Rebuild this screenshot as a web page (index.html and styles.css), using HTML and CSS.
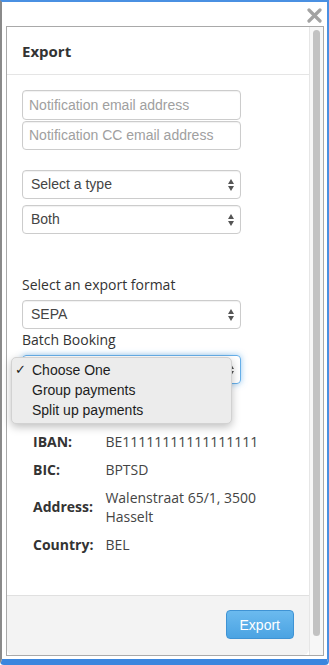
FILE: index.html
```html
<!DOCTYPE html>
<html lang="en">
<head>
	<meta charset="UTF-8">
	<title>Export</title>
	<link rel="stylesheet" href="styles.css">
</head>
<body>
	<div class="window">
		<div class="topbar">
			<svg class="close" width="15" height="15" viewBox="0 0 15 15">
				<path d="M2 2 L13 13 M13 2 L2 13" stroke="#a3a3a3" stroke-width="3.2" stroke-linecap="round"/>
			</svg>
		</div>
		<div class="frame">
			<section class="modal">
				<header class="modal-head">Export</header>
				<div class="modal-body">
					<div class="field">Notification email address</div>
					<div class="field field-cc">Notification CC email address</div>

					<div class="select select-type">Select a type<span class="arrows"></span></div>
					<div class="select select-both">Both<span class="arrows"></span></div>

					<label class="lbl lbl-format">Select an export format</label>
					<div class="select select-sepa">SEPA<span class="arrows"></span></div>
					<label class="lbl lbl-batch">Batch Booking</label>
					<div class="batch-wrap">
						<div class="select focused">Choose One<span class="arrows"></span></div>
						<ul class="popup">
							<li class="checked">Choose One</li>
							<li>Group payments</li>
							<li>Split up payments</li>
						</ul>
					</div>

					<h4 class="sub">Ordering account</h4>
					<dl class="details">
						<dt>IBAN:</dt><dd>BE11111111111111111</dd>
						<dt>BIC:</dt><dd>BPTSD</dd>
						<dt>Address:</dt><dd>Walenstraat 65/1, 3500 Hasselt</dd>
						<dt>Country:</dt><dd>BEL</dd>
					</dl>
				</div>
				<footer class="modal-foot">
					<button class="btn">Export</button>
				</footer>
			</section>
			<div class="scrollbar"><div class="thumb"></div></div>
		</div>
	</div>
</body>
</html>
```

FILE: styles.css
```css
html,body{
	margin: 0;
	height: 100%;
}
body{
	font-family: "Open Sans", "Liberation Sans", sans-serif;
	color: #333;
	background: #fff;
}
.window{
	width: 329px;
	height: 665px;
	box-sizing: border-box;
	border-top: 2px solid #4a90e2;
	border-left: 2px solid #8a8a8a;
	border-right: 2px solid #4a90e2;
	border-bottom: 6px solid #3b86de;
	border-radius: 0 0 4px 4px;
	padding: 0 3px 3px 4px;
	display: flex;
	flex-direction: column;
}
.topbar{
	height: 24px;
	display: flex;
	justify-content: flex-end;
}
.close{
	margin: 6px 2px 0 0;
}
.frame{
	flex: 1;
	border: 1px solid #a9a9a9;
	display: flex;
	min-height: 0;
}
.modal{
	flex: 1;
	display: flex;
	flex-direction: column;
	border-right: 1px solid #e6e6e6;
}
.modal-head{
	height: 48px;
	box-sizing: border-box;
	padding: 14px 15px;
	font-size: 15px;
	line-height: 20px;
	font-weight: bold;
	border-bottom: 1px solid #e5e5e5;
}
.modal-body{
	flex: 1;
	padding: 15px 15px 0;
}
.field,
.select{
	width: 219px;
	height: 29px;
	box-sizing: border-box;
	border: 1px solid #ccc;
	border-radius: 4px;
	font-family: "Liberation Sans", Arial, sans-serif;
	font-size: 14px;
	line-height: 27px;
	box-shadow: inset 0 1px 1px rgba(0,0,0,.06);
}
.field{
	padding: 0 6px;
	color: #a0a0a0;
}
.field:first-child{
	height: 30px;
	line-height: 28px;
}
.field-cc{
	margin-top: 1px;
}
.select{
	position: relative;
	padding: 0 8px;
	color: #444;
}
.arrows{
	position: absolute;
	right: 5px;
	top: 8px;
	width: 7px;
	height: 12px;
}
.arrows:before,
.arrows:after{
	content: "";
	position: absolute;
	left: 0;
	border-left: 3.5px solid transparent;
	border-right: 3.5px solid transparent;
}
.arrows:before{
	top: 0;
	border-bottom: 5px solid #555;
}
.arrows:after{
	bottom: 0;
	border-top: 5px solid #555;
}
.select-type{
	margin-top: 20px;
}
.select-both{
	margin-top: 6px;
}
.lbl{
	display: block;
	font-size: 14px;
	line-height: 18px;
}
.lbl-format{
	margin-top: 42px;
}
.select-sepa{
	margin-top: 6px;
}
.lbl-batch{
	margin-top: 2px;
}
.batch-wrap{
	position: relative;
	margin-top: 6px;
}
.focused{
	border-color: #66afe9;
	box-shadow: 0 0 6px rgba(102,175,233,.7);
}
.popup{
	position: absolute;
	left: -11px;
	top: 2px;
	width: 221px;
	margin: 0;
	padding: 2px 0 3px;
	list-style: none;
	background: #ececec;
	border: 1px solid #d2d2d2;
	border-radius: 5px;
	box-shadow: 0 3px 8px rgba(0,0,0,.25);
	font-family: "Liberation Sans", Arial, sans-serif;
	font-size: 14px;
	line-height: 20px;
	color: #1c1c1c;
	z-index: 2;
	box-sizing: border-box;
}
.popup li{
	padding-left: 20px;
	position: relative;
}
.popup li.checked:before{
	content: "\2713";
	position: absolute;
	left: 3px;
	font-size: 13px;
}
.sub{
	margin: 22px 0 5px;
	font-size: 13px;
	line-height: 16px;
}
.details{
	margin: 0 0 0 11px;
	width: 250px;
	display: grid;
	grid-template-columns: auto 1fr;
	column-gap: 12px;
	font-size: 14px;
	line-height: 19px;
}
.details dt,
.details dd{
	margin: 0;
	padding: 4.5px 0;
	display: flex;
	align-items: center;
}
.details dt{
	font-weight: bold;
}
.details dd{
	color: #444;
}
.modal-foot{
	height: 60px;
	box-sizing: border-box;
	border-top: 1px solid #e0e0e0;
	background: #f3f3f3;
	border-radius: 0 0 6px 6px;
	padding: 14px 15px 0;
	display: flex;
	justify-content: flex-end;
	align-items: flex-start;
}
.btn{
	height: 29px;
	padding: 0 13px;
	border: 1px solid #3f93d4;
	border-radius: 4px;
	background: linear-gradient(#6bbaef, #4ba3e2);
	color: #fff;
	font-family: "Liberation Sans", Arial, sans-serif;
	font-size: 14px;
}
.scrollbar{
	width: 13px;
	background: #f7f7f7;
	padding: 3px 0 0 3px;
	box-sizing: border-box;
}
.thumb{
	width: 7px;
	height: 606px;
	border-radius: 4px;
	background: #c2c2c2;
}
```
